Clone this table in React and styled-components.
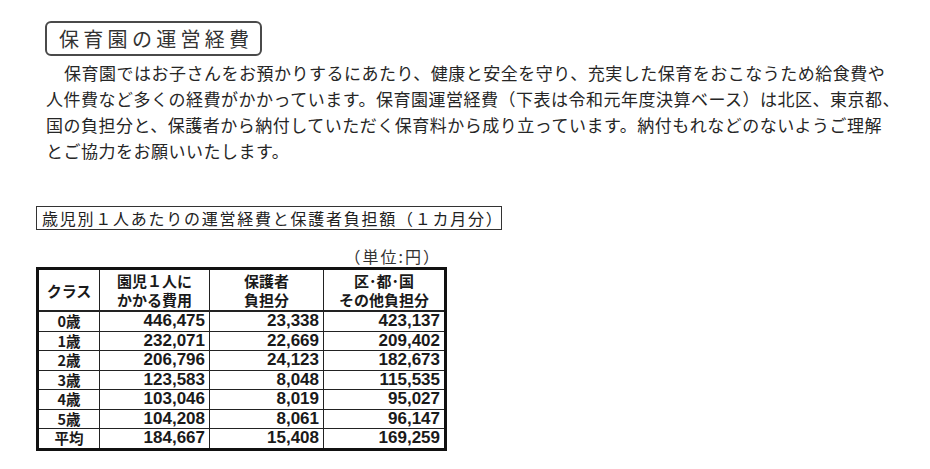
import styled, { createGlobalStyle } from "styled-components";

const GlobalStyle = createGlobalStyle`
  body {
    margin: 0;
    background: #ffffff;
    font-family: "Noto Sans CJK JP", "Noto Sans", sans-serif;
    color: #222;
  }
`;

const Page = styled.div`
  width: 930px;
  height: 469px;
  padding: 21px 0 0 36px;
  box-sizing: border-box;
  overflow: hidden;
`;

const TitleBox = styled.h1`
  display: inline-block;
  margin: 0 0 0 9px;
  padding: 0 7px 0 12px;
  height: 31px;
  line-height: 31px;
  border: 2px solid #4a4a4a;
  border-radius: 6px;
  font-size: 20px;
  font-weight: 400;
  letter-spacing: 4.3px;
  color: #333;
`;

const Paragraph = styled.p`
  margin: 4px 0 0 10px;
  font-size: 17px;
  line-height: 26px;
  letter-spacing: 0.5px;
  color: #262626;
`;

const Line = styled.span`
  display: block;
  white-space: nowrap;
  text-indent: ${(p) => (p.$indent ? "18px" : "0")};
`;

const Caption = styled.div`
  margin-top: 42px;
  width: 459px;
  height: 22px;
  line-height: 22px;
  border: 1px solid #333;
  padding-left: 5px;
  box-sizing: content-box;
  font-size: 16px;
  letter-spacing: 1.75px;
  color: #222;
  white-space: nowrap;
`;

const TableWrap = styled.div`
  width: 408px;
  margin-top: 15px;
`;

const Unit = styled.div`
  text-align: right;
  padding-right: 3px;
  font-size: 16px;
  line-height: 22px;
  letter-spacing: 2px;
  color: #333;
`;

const Table = styled.table`
  width: 408px;
  border-collapse: collapse;
  border: 3px solid #111;
  table-layout: fixed;
`;

const HeadCell = styled.th`
  height: 40px;
  padding: 0;
  border: 1.5px solid #222;
  border-bottom-width: 2px;
  font-size: 15px;
  font-weight: 700;
  line-height: 19px;
  text-align: center;
  vertical-align: middle;
  color: #1a1a1a;
`;

const Cell = styled.td`
  height: 18.5px;
  padding: 0 ${(p) => (p.$center ? "0" : "4px")} 0 0;
  border: 1.5px solid #222;
  font-family: ${(p) =>
    p.$center
      ? '"Noto Sans CJK JP", sans-serif'
      : '"Liberation Sans", Arial, sans-serif'};
  font-size: ${(p) => (p.$center ? "14.5px" : "17px")};
  font-weight: 700;
  line-height: 18.5px;
  text-align: ${(p) => (p.$center ? "center" : "right")};
  color: #1a1a1a;
  white-space: nowrap;
`;

const rows = [
  ["0歳", "446,475", "23,338", "423,137"],
  ["1歳", "232,071", "22,669", "209,402"],
  ["2歳", "206,796", "24,123", "182,673"],
  ["3歳", "123,583", "8,048", "115,535"],
  ["4歳", "103,046", "8,019", "95,027"],
  ["5歳", "104,208", "8,061", "96,147"],
  ["平均", "184,667", "15,408", "169,259"],
];

export default function App() {
  return (
    <>
      <GlobalStyle />
      <Page>
        <TitleBox>保育園の運営経費</TitleBox>
        <Paragraph>
          <Line $indent>
            保育園ではお子さんをお預かりするにあたり、健康と安全を守り、充実した保育をおこなうため給食費や
          </Line>
          <Line>
            人件費など多くの経費がかかっています。保育園運営経費（下表は令和元年度決算ベース）は北区、東京都、
          </Line>
          <Line>
            国の負担分と、保護者から納付していただく保育料から成り立っています。納付もれなどのないようご理解
          </Line>
          <Line>とご協力をお願いいたします。</Line>
        </Paragraph>

        <Caption>歳児別１人あたりの運営経費と保護者負担額（１カ月分）</Caption>

        <TableWrap>
          <Unit>（単位:円）</Unit>
          <Table>
            <colgroup>
              <col style={{ width: 62 }} />
              <col style={{ width: 110 }} />
              <col style={{ width: 114 }} />
              <col style={{ width: 122 }} />
            </colgroup>
            <thead>
              <tr>
                <HeadCell>クラス</HeadCell>
                <HeadCell>
                  園児１人に
                  <br />
                  かかる費用
                </HeadCell>
                <HeadCell>
                  保護者
                  <br />
                  負担分
                </HeadCell>
                <HeadCell>
                  区･都･国
                  <br />
                  その他負担分
                </HeadCell>
              </tr>
            </thead>
            <tbody>
              {rows.map((r) => (
                <tr key={r[0]}>
                  <Cell $center>{r[0]}</Cell>
                  <Cell>{r[1]}</Cell>
                  <Cell>{r[2]}</Cell>
                  <Cell>{r[3]}</Cell>
                </tr>
              ))}
            </tbody>
          </Table>
        </TableWrap>
      </Page>
    </>
  );
}
